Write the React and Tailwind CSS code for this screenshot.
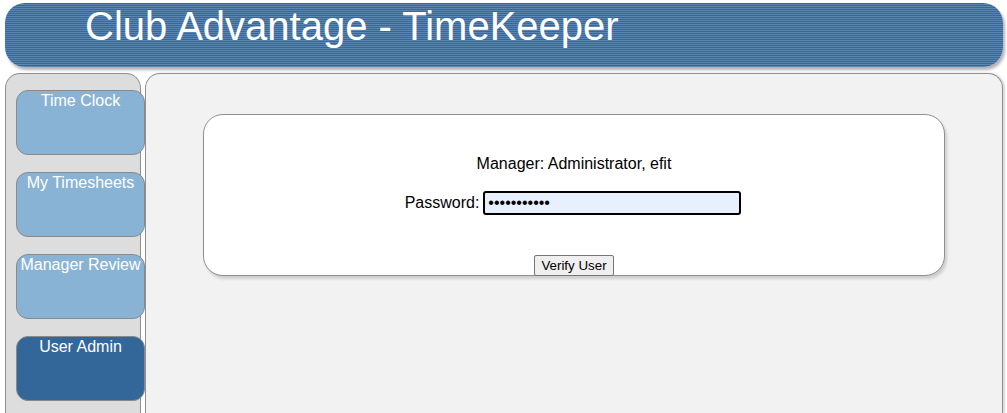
import { useState } from 'react';

const NAV_ITEMS = [
  { label: 'Time Clock', active: false },
  { label: 'My Timesheets', active: false },
  { label: 'Manager Review', active: false },
  { label: 'User Admin', active: true },
];

const NavButton = ({ label, active }) => (
  <div
    className={`w-[129px] h-[65px] shrink-0 rounded-[12px] border border-[#8a8a8a] text-white text-[16px] leading-[18px] text-center pt-[1px] ${
      active ? 'bg-[#336699]' : 'bg-[#89b3d4]'
    }`}
  >
    {label}
  </div>
);

export default function App() {
  const [password, setPassword] = useState('aaaaaaaaaaa');

  return (
    <div className="h-screen overflow-hidden bg-white font-['Liberation_Sans',Arial,sans-serif] flex flex-col">
      {/* Banner */}
      <div className="mt-[3px] ml-[5px] mr-[4px] h-[64px] shrink-0 rounded-[20px] bg-[repeating-linear-gradient(to_bottom,#36669a_0px,#36669a_1px,#5c85b0_1px,#5c85b0_2px)] shadow-[2px_3px_3px_rgba(0,0,0,0.3)] pl-[80px]">
        <h1 className="text-white text-[40px] leading-[46px] pt-0">Club Advantage - TimeKeeper</h1>
      </div>

      <div className="flex flex-1 mt-[6px] ml-[5px] mr-[4px] gap-[4px] min-h-0">
        {/* Side navigation */}
        <div className="w-[136px] shrink-0 bg-[#dddddd] border border-[#8f8f8f] border-b-0 rounded-t-[15px] pt-[16px] pl-[10px] flex flex-col gap-[17px] relative">
          {NAV_ITEMS.map((item) => (
            <NavButton key={item.label} label={item.label} active={item.active} />
          ))}
        </div>

        {/* Main content */}
        <div className="flex-1 bg-[#f2f2f2] border border-[#8f8f8f] border-b-0 rounded-t-[15px] shadow-[2px_0_2px_rgba(0,0,0,0.15)] pt-[40px] px-[57px]">
          <div className="bg-white border border-[#8f8f8f] rounded-[20px] shadow-[2px_3px_3px_rgba(0,0,0,0.15)] flex flex-col items-center pt-[40px] text-[16px] text-black">
            <div className="leading-[18px]">Manager: Administrator, efit</div>
            <div className="flex items-center gap-[4px] mt-[18px] -ml-[2px]">
              <label className="leading-[18px]">Password:</label>
              <input
                type="password"
                value={password}
                onChange={(e) => setPassword(e.target.value)}
                className="w-[258px] h-[24px] border-2 border-black rounded-[3px] bg-[#e8f0fe] px-[3px] text-[16px] outline-none"
              />
            </div>
            <button className="mt-[40px] -mb-px h-[21px] px-[6px] bg-[#efefef] border border-[#767676] rounded-[2px] text-[13.33px] leading-[16px] text-black">
              Verify User
            </button>
          </div>
        </div>
      </div>
    </div>
  );
}
